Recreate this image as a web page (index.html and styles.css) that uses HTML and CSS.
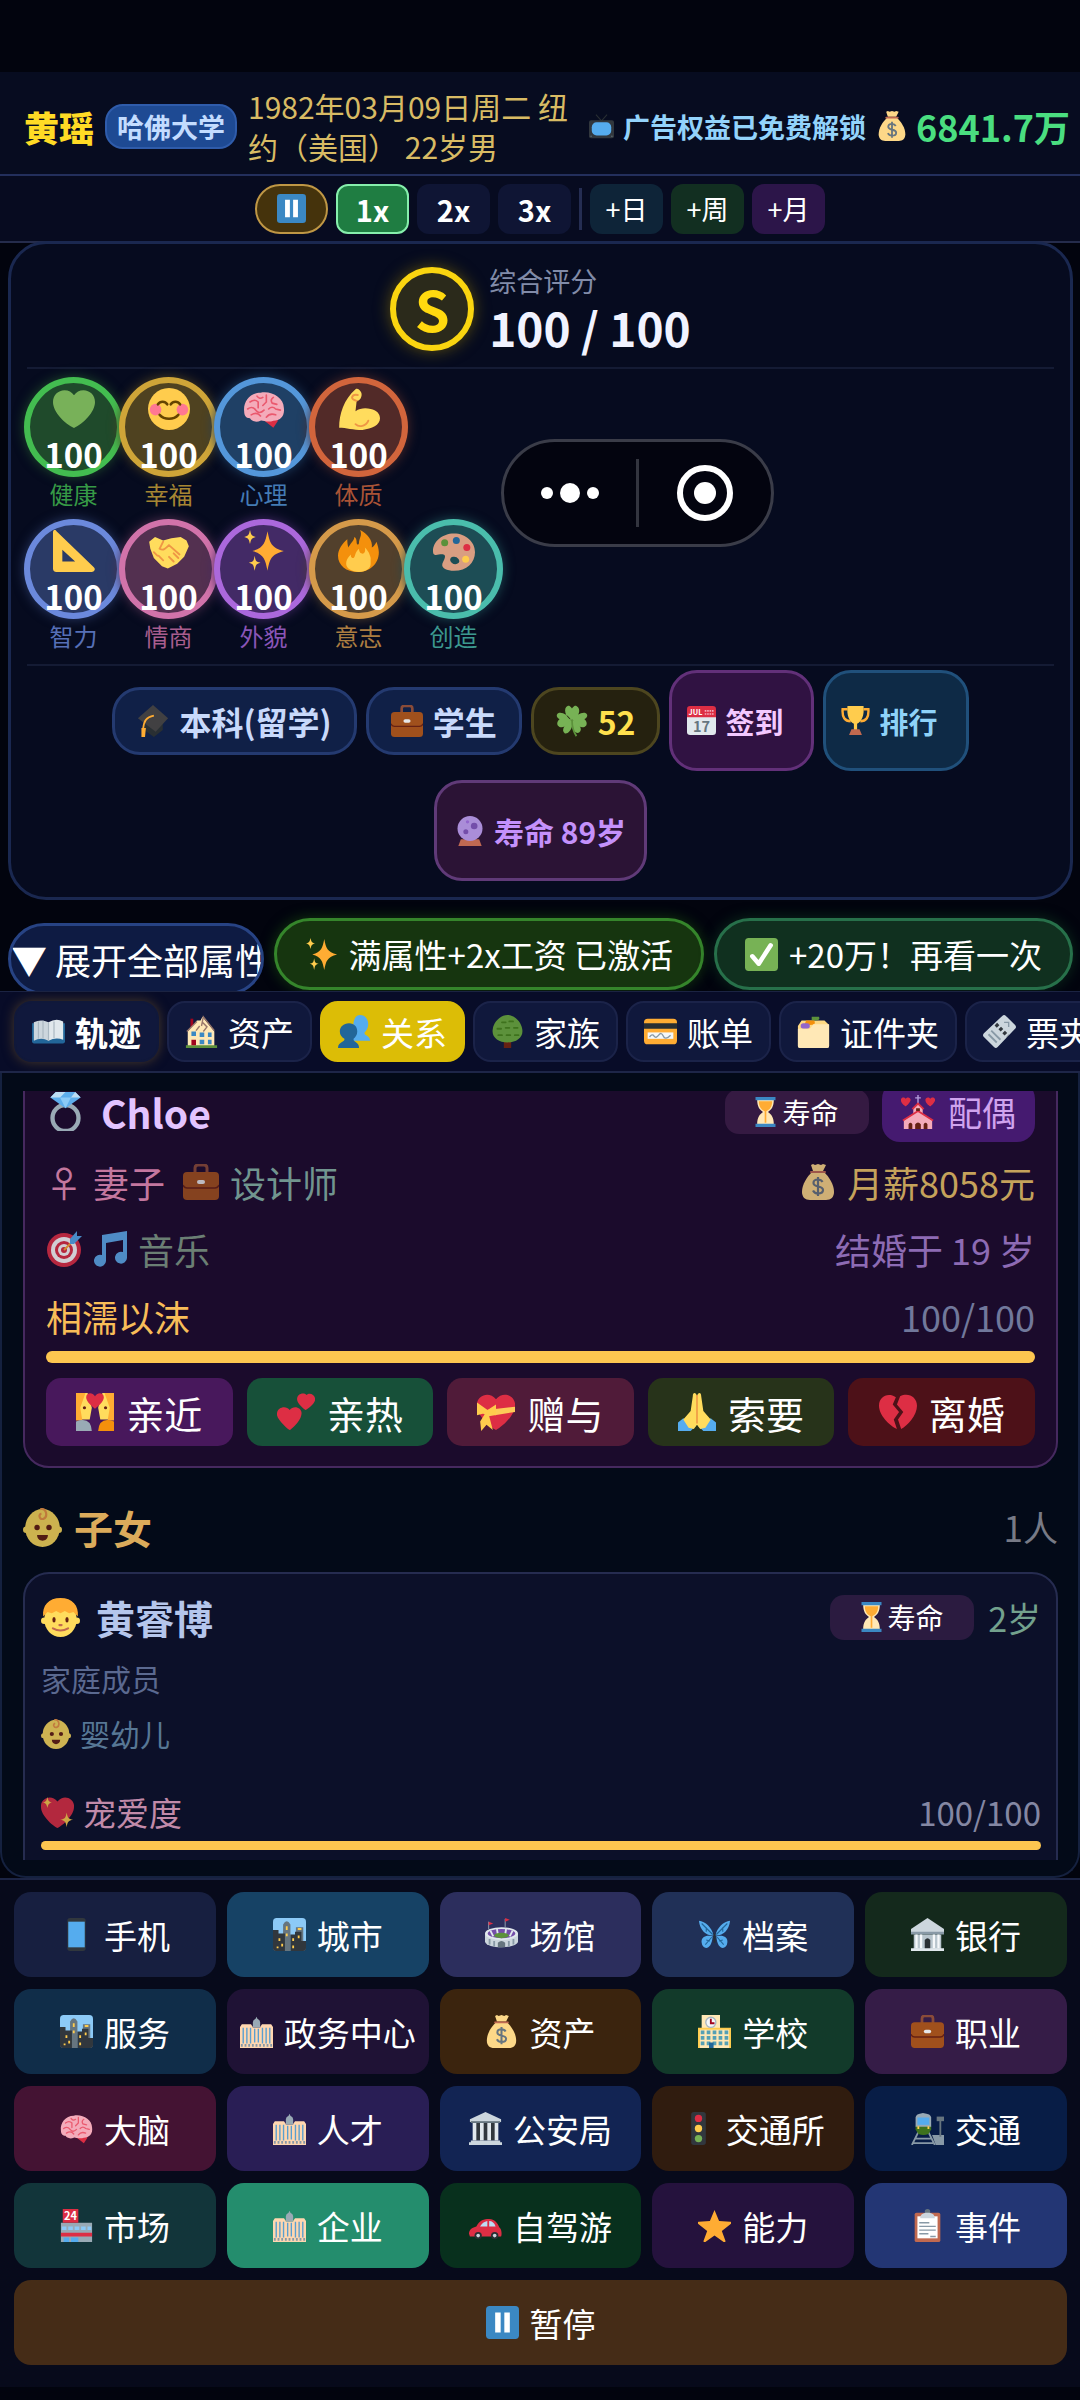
FILE: index.html
```html
<!DOCTYPE html>
<html lang="zh-CN">
<head>
<meta charset="utf-8">
<meta name="viewport" content="width=device-width, initial-scale=1">
<title>黄瑶 · 关系</title>
<link rel="stylesheet" href="styles.css">
</head>
<body>
<svg class="sprite" aria-hidden="true">
  <symbol id="pause" viewBox="0 0 36 36"><rect width="36" height="36" rx="4" fill="#3b88c3"/><path fill="#fff" d="M10 7h6v22h-6zM20 7h6v22h-6z"/></symbol>
  <symbol id="tv" viewBox="0 0 36 36"><path d="M10 1l8 9 8-9" fill="none" stroke="#292f33" stroke-width="1.500"/><rect y="9" width="36" height="26" rx="3" fill="#31373d"/><rect x="4" y="12" width="28" height="19" rx="7" fill="#55acee"/><circle cx="3" cy="32" r="1" fill="#66757f"/><circle cx="33" cy="32" r="1" fill="#66757f"/></symbol>
  <symbol id="money" viewBox="0 0 36 36"><path fill="#fdd888" d="M12 8C7 13 2 20 2 28c0 5 3 8 8 8h16c5 0 8-3 8-8 0-8-5-15-10-20z"/><path fill="#fdd888" d="M11 1l2-1 2 1 3-1 3 1 2-1 3 1-3 6H13z"/><path d="M11 8h14" stroke="#bf6952" stroke-width="2" stroke-linecap="round"/><path d="M22.500 18c-1-2-3-2.500-4.500-2.500-3 0-4.500 1.500-4.500 3.500 0 5 9.500 2 9.500 7 0 2.500-2 3.500-5 3.500-2 0-4-1-5-3M18 13v19" fill="none" stroke="#67757f" stroke-width="2.200"/></symbol>
  <symbol id="heart" viewBox="0 0 36 36"><path fill="#78b159" d="M36 11.900c0-5.500-4.400-9.900-9.900-9.900-3.400 0-6.300 1.700-8.100 4.200C16.200 3.700 13.300 2 9.900 2 4.400 2 0 6.400 0 11.900c0 8.600 9.900 18.500 18 22.300 8.100-3.800 18-13.700 18-22.300z"/></symbol>
  <symbol id="blush" viewBox="0 0 36 36"><circle cx="18" cy="18" r="18" fill="#ffcc4d"/><circle cx="6.500" cy="18.500" r="5" fill="#ff7892"/><circle cx="29.500" cy="18.500" r="5" fill="#ff7892"/><path d="M8.500 14c2-3 6-3 8 0M19.500 14c2-3 6-3 8 0M10 23c4 4.500 12 4.500 16 0" fill="none" stroke="#664500" stroke-width="2.200" stroke-linecap="round"/></symbol>
  <symbol id="brain" viewBox="0 0 36 36"><path fill="#dd2e44" d="M17 27l9 7 4-6-3-3z"/><path fill="#f4abba" d="M1 20C0 12 6 4 15 4c9-2 20 4 20 13 1 7-3 11-9 11-5 2-10-1-11 0-4 2-8 0-9-2-4 0-5-3-5-6z"/><path d="M6 12q4-3 7 0v5M12 7q2 3 5 1M20 6v6l-3 3M26 8q-3 2-1 5l4 1M4 18q4-3 7 1t7 0M22 18q3-3 6 0l4 1M7 23q5-3 8 1M20 25q3-4 8-2" fill="none" stroke="#ea596e" stroke-width="1.400" stroke-linecap="round"/></symbol>
  <symbol id="muscle" viewBox="0 0 36 36"><path fill="#ffdc5d" d="M15 1c2-1 4 1 5 3 1 3-1 7-4 7l-1 9c4-3 9-3 13-2 5 1 8 4 8 8 0 6-7 9-15 10-8 0-14-2-20-2 0-12 4-24 14-33z"/><path d="M15 31c3 3 9 2 11-3M16 11q-4-1-4-3 1-3 5-2" fill="none" stroke="#ef9645" stroke-width="1.600" stroke-linecap="round"/></symbol>
  <symbol id="ruler" viewBox="0 0 36 36"><path fill="#ffcc4d" fill-rule="evenodd" d="M0 2C0 0 2-1 3 1l32 31c2 2 0 4-2 4H3c-2 0-3-1-3-3zM8 17v10h11z"/></symbol>
  <symbol id="hands" viewBox="0 0 36 36"><path fill="#ffdc5d" d="M1 10l5-4 7 3 7-2 8-1 5 3 2 5-4 9-6 6-8 4-5-2-7-7-3-8z"/><path d="M13 10l-3 6c3 2 5 0 8-3l9 8M18 23l4 4M22 20l4 4M9 22l4 4M5 19l3 3" fill="none" stroke="#ef9645" stroke-width="1.600" stroke-linecap="round"/></symbol>
  <symbol id="sparkles" viewBox="0 0 36 36"><path fill="#ffac33" d="M21 1c2 10 3 14 14 17-11 3-12 7-14 17-2-10-3-14-13-17 10-3 11-7 13-17z"/><path fill="#ffcc4d" d="M6 0c1 4 1 5 5 6-4 1-4 2-5 6-1-4-1-5-5-6 4-1 4-2 5-6zM10 22c1 5 1 5 5 6-4 1-4 2-5 7-1-5-1-6-5-7 4-1 4-1 5-6z"/></symbol>
  <symbol id="fire" viewBox="0 0 36 36"><path fill="#f4900c" d="M35 19c0-3-1-6-2-9-1 2-2 4-4 5C30 9 25 3 19 0c2 5-1 7-1 11 0 2-2 2-2 0 0-1 0-4-2-5 0 3-4 6-5 9-1-2-1-5-1-7C4 11 0 17 0 22c0 8 7 14 17 14s18-7 18-17z"/><path fill="#ffcc4d" d="M28 24c-1-4-2-6-5-9 1 4-1 6-3 5-2-1-2-4-2-4-4 3-3 8-5 8s-2-2-2-3c-3 3-4 5-4 8 0 4 5 7 11 7s10-3 10-7z"/></symbol>
  <symbol id="palette" viewBox="0 0 36 36"><path fill="#d99e82" fill-rule="evenodd" d="M18 3C8 3 0 10 0 18c0 6 5 2 9 3 3 1 0 5-1 8-1 4 4 6 10 6 11 0 18-7 18-16S28 3 18 3zm-1 20a4 3 20 1 1-1 5 4 3 20 0 1 1-5z"/><circle cx="10" cy="11" r="3" fill="#5c913b"/><circle cx="20" cy="9" r="3" fill="#226699"/><circle cx="29" cy="15" r="3" fill="#dd2e44"/><circle cx="28" cy="25" r="3" fill="#ffcc4d"/></symbol>
  <symbol id="cap" viewBox="0 0 36 36"><path fill="#292f33" d="M8 17l10 6 11-5v10l-10 8-11-8z"/><path fill="#414042" d="M18 0L35 15 21 30 1 15z"/><path d="M19 12C10 14 8 18 7 26" fill="none" stroke="#ffac33" stroke-width="2"/><path fill="#ffac33" d="M5 26h5l-1 10H5z"/></symbol>
  <symbol id="case" viewBox="0 0 36 36"><path d="M12 9V4q0-3 3-3h6q3 0 3 3v5" fill="none" stroke="#8a4b38" stroke-width="3"/><rect y="8" width="36" height="28" rx="4" fill="#a0501c"/><path d="M0 21q1 3 4 3h28q3 0 4-3" fill="none" stroke="#662113" stroke-width="1.500"/><rect x="14" y="16" width="8" height="4" rx="2" fill="#e6e7e8"/></symbol>
  <symbol id="clover" viewBox="0 0 36 36"><path fill="#77b255" d="M18 17C10 14 8 3 13 1c3-1 5 3 5 3s2-4 5-3c6 3 3 13-5 16zM17 17C13 10 3 6 1 11c-1 3 3 5 3 5s-4 3-2 7c4 5 13 0 15-6zM19 17c4-7 14-11 16-6 1 3-3 5-3 5s4 3 2 7c-4 5-13 0-15-6z"/><path fill="#77b255" d="M18 17c-8 3-13 12-8 15 3 1 7-3 8-8 1 5 5 9 8 7 5-3 0-11-8-14z"/><path d="M18 17q0 11 5 18" fill="none" stroke="#5c913b" stroke-width="2"/></symbol>
  <symbol id="calendar" viewBox="0 0 36 36"><rect y="5" width="36" height="31" rx="4" fill="#e1e8ed"/><path fill="#dd2e44" d="M0 14V4q0-4 4-4h28q4 0 4 4v10z"/><text x="2" y="11" font-size="9" font-weight="700" fill="#fff">JUL</text><path d="M22 6h12M22 10h12" stroke="#f4abba" stroke-width="2" stroke-dasharray="2 1"/><text x="18" y="32" font-size="18" text-anchor="middle" fill="#66757f">17</text></symbol>
  <symbol id="trophy" viewBox="0 0 36 36"><path d="M8 4H2q-1 15 10 15M28 4h6q1 15-10 15" fill="none" stroke="#ffac33" stroke-width="3"/><path fill="#ffcc4d" d="M8 0h20c1 12-2 19-8 22v8h-4v-8C10 19 7 12 8 0z"/><path fill="#c1694f" d="M13 29h10l3 7H10z"/></symbol>
  <symbol id="crystal" viewBox="0 0 36 36"><path fill="#bf6952" d="M7 28h22l3 8H4z"/><circle cx="18" cy="15" r="15" fill="#aa8dd8"/><circle cx="23" cy="12" r="4" fill="#744eaa"/><circle cx="13" cy="19" r="3" fill="#744eaa"/><circle cx="15" cy="7" r="2" fill="#9266cc"/></symbol>
  <symbol id="check" viewBox="0 0 36 36"><rect width="36" height="36" rx="4" fill="#77b255"/><path d="M8 20l7 8L28 8" fill="none" stroke="#fff" stroke-width="5" stroke-linecap="round" stroke-linejoin="round"/></symbol>
  <symbol id="book" viewBox="0 0 36 36"><path fill="#226699" d="M0 9h36v20q0 2-2 2H2q-2 0-2-2z"/><path fill="#ccd6dd" d="M2 8q8-4 16 0v20q-8-4-16 0z"/><path fill="#e1e8ed" d="M18 8q8-5 16-1v20q-8-3-16 1z"/><path d="M18 8v20M12 6v20M7 7v19M24 7v18" stroke="#aab8c2" stroke-width="1.300"/></symbol>
  <symbol id="house" viewBox="0 0 36 36"><path fill="#a0041e" d="M6 4h3v9H6z"/><path fill="#ffe8b6" d="M3 18L13 6h4l2-4 13 16v16H3z"/><path d="M2 18L13 7M18 12l2-10 12 15M16 12l-4 5M19 8l5 5-4 5" fill="none" stroke="#99776b" stroke-width="1.500"/><path fill="#5c913b" d="M1 33h34v3H1z"/><path fill="#3b88c3" d="M7 18h5v5H7zM16 19h5v5h-5zM25 19h4v5h-4zM16 27h5v5h-5zM25 27h4v5h-4z"/><path fill="#a0041e" d="M7 27h5v6H7z"/></symbol>
  <symbol id="people" viewBox="0 0 36 36"><path fill="#55acee" d="M24 0c6 0 9 5 9 10 0 4-2 7-4 9-1 4 6 3 6 9H15l2-20c1-5 3-8 7-8z"/><path fill="#226699" d="M12 9c6 0 9 4 9 9 0 4-2 6-4 8-1 4 6 3 6 10H0c0-7 8-6 7-10-3-2-5-4-5-8 0-5 4-9 10-9z"/></symbol>
  <symbol id="tree" viewBox="0 0 36 36"><path fill="#662113" d="M14 25h8v11h-8z"/><path fill="#5c913b" d="M18 0c8 0 15 8 16 15 2 9-6 15-16 15S0 24 2 15C3 8 10 0 18 0z"/><path d="M12 8h4M20 7h4M7 15h4M16 14h4M25 14h4M8 22h4M17 22h4M26 22h4" stroke="#3e721d" stroke-width="2" stroke-linecap="round"/></symbol>
  <symbol id="card" viewBox="0 0 36 36"><rect y="4" width="36" height="28" rx="4" fill="#ffac33"/><path fill="#292f33" d="M0 9h36v6H0z"/><path fill="#f4f7f9" d="M4 19h28v7H4z"/><path d="M6 24q3-4 5-1t5-1 5 1 8-1" fill="none" stroke="#8899a6" stroke-width="1.500"/></symbol>
  <symbol id="folder" viewBox="0 0 36 36"><path fill="#ffd983" d="M1 12l4-6h25l5 5v23H1z"/><path fill="#5c913b" d="M16 2h8q2 4-4 4h-4z"/><path fill="#f4900c" d="M10 6h9q2 5-5 5h-6z"/><rect x="4" y="9" width="10" height="6" rx="3" fill="#9266cc"/><path fill="#ffe8b6" d="M1 15h13l4-5h17v24q0 2-2 2H3q-2 0-2-2z"/></symbol>
  <symbol id="ticket" viewBox="0 0 36 36"><path fill="#ccd6dd" d="M21 1q2-2 4 0l10 10q2 2 0 4L16 35q-2 2-4 0L1 24q-2-2 0-4z"/><path d="M14 10l13 13" stroke="#31373d" stroke-width="4" stroke-dasharray="3.500 2.500"/><path d="M9 17l10 10M6 21l9 9" stroke="#8899a6" stroke-width="2"/><path d="M23 8h5v5" fill="none" stroke="#8899a6" stroke-width="1.500"/></symbol>
  <symbol id="ring" viewBox="0 0 36 36"><circle cx="18" cy="24" r="12" fill="none" stroke="#99aab5" stroke-width="4"/><path fill="#5dadec" d="M9 0h18l5 5-14 10L4 5z"/><path fill="#bdddf4" d="M9 0h9l-5 5H4zM27 0l5 5h-9z"/><path fill="#8ccaf7" d="M13 5h10l-5 10z"/></symbol>
  <symbol id="glass" viewBox="0 0 24 36"><path fill="#ffe8b6" d="M2 3h20c0 9-3 12-7 15 4 3 7 6 7 15H2c0-9 3-12 7-15-4-3-7-6-7-15z"/><path fill="#ffac33" d="M4 5h16c0 7-3 10-7 12v14h-2V17C7 15 4 12 4 5z"/><path fill="#3b88c3" d="M0 0h24v4H0zM0 32h24v4H0z"/></symbol>
  <symbol id="wedding" viewBox="0 0 36 36"><path fill="#dd2e44" d="M5 4c2-3 6-1 5 2-1 3-5 6-5 6S0 9 0 6c-1-3 3-5 5-2zM31 4c2-3 6-1 5 2-1 3-5 6-5 6s-5-3-5-6c-1-3 3-5 5-2z"/><path d="M18 0v9M15 3h6" stroke="#b39ddb" stroke-width="1.500"/><path fill="#f4abba" d="M13 14l5-5 5 5v6l10 7v9H3v-9l10-7z"/><path d="M12 15l6-6 6 6M2 27l16-10 16 10" fill="none" stroke="#dd2e44" stroke-width="2"/><path fill="#662113" d="M15 36v-5q3-4 6 0v5zM8 36v-5q2-3 4 0v5zM24 36v-5q2-3 4 0v5zM16 17v-3h4v3z"/></symbol>
  <symbol id="target" viewBox="0 0 36 36"><circle cx="18" cy="19" r="17" fill="#dd2e44"/><circle cx="18" cy="19" r="13" fill="#fff"/><circle cx="18" cy="19" r="9" fill="#dd2e44"/><circle cx="18" cy="19" r="6" fill="#fff"/><circle cx="18" cy="19" r="3" fill="#dd2e44"/><path d="M18 19L29 8" stroke="#ffac33" stroke-width="2"/><path fill="#55acee" d="M24 8l7-8v5h5l-8 8h-4z"/></symbol>
  <symbol id="music" viewBox="0 0 36 36"><path fill="#5dadec" d="M10 4l25-4v27a6 6 0 1 1-4-6V9l-17 3v18a6 6 0 1 1-4-6z"/></symbol>
  <symbol id="kiss" viewBox="0 0 36 36"><path fill="#ffdc5d" d="M0 0h11l4 14-2 11H0zM36 0H25l-4 14 2 11h13z"/><path fill="#ffac33" d="M0 0h9L4 14l2 12H0zM36 0h-9l5 14-2 12h6z"/><path fill="#99aab5" d="M0 27q14-5 15 9H0z"/><path fill="#f4900c" d="M36 27q-14-5-15 9h15z"/><path fill="#dd2e44" d="M18 3c3-5 10-3 8 3-1 4-8 9-8 9s-7-5-8-9c-2-6 5-8 8-3z"/><circle cx="8" cy="14" r="1.500" fill="#662113"/><circle cx="28" cy="14" r="1.500" fill="#662113"/></symbol>
  <symbol id="two-hearts" viewBox="0 0 36 36"><path fill="#dd2e44" d="M12 16c4-5 13-2 11 5-1 6-10 14-11 14S1 26 0 21c-1-7 8-10 12-5z"/><path fill="#dd2e44" d="M28 2c3-3 9 0 8 5-1 4-8 9-9 9s-8-6-8-10c0-5 6-7 9-4z"/></symbol>
  <symbol id="gift-heart" viewBox="0 0 36 36"><path fill="#dd2e44" d="M18 6C25-3 37 3 36 12c0 9-12 20-18 23C12 32 0 21 0 12-1 3 11-3 18 6z"/><path fill="#fdcb58" d="M1 17L36 13v5L11 22z"/><path fill="#ffcc4d" d="M0 9l10 7 8-5v10l-7-1 4 15-6-5-5 6-1-9 5-8-8 2z"/></symbol>
  <symbol id="pray" viewBox="0 0 36 36"><path fill="#55acee" d="M5 24l-5 4v8h12l5-5zM31 24l5 4v8H24l-5-5z"/><path fill="#ffdc5d" d="M18 3c-1-4-4-4-4 0l-2 14-7 8 5 8 5 1 3-4 3 4 5-1 5-8-7-8-2-14c0-4-3-4-4 0z"/><path d="M18 2v27" stroke="#ef9645" stroke-width="1.500"/></symbol>
  <symbol id="broken" viewBox="0 0 36 36"><path fill="#dd2e44" d="M16 4C8-1 0 4 0 12c0 9 10 19 17 22l-3-9 5-7-6-7zM20 3c8-4 16 1 16 9 0 9-9 19-15 22l-3-9 5-7-6-7z"/></symbol>
  <symbol id="baby" viewBox="0 0 36 36"><circle cx="3" cy="20" r="3" fill="#ffdc5d"/><circle cx="33" cy="20" r="3" fill="#ffdc5d"/><ellipse cx="18" cy="18.500" rx="16" ry="17.500" fill="#ffdc5d"/><path d="M16 1c6-1 7 7 3 9-4 1-5-4-2-5" fill="none" stroke="#ef9645" stroke-width="2"/><circle cx="13" cy="18" r="2.500" fill="#662113"/><circle cx="24" cy="18" r="2.500" fill="#662113"/><path fill="#662113" d="M13 25h10c0 7-10 7-10 0z"/></symbol>
  <symbol id="boy" viewBox="0 0 36 36"><circle cx="3" cy="21" r="3" fill="#ffdc5d"/><circle cx="33" cy="21" r="3" fill="#ffdc5d"/><ellipse cx="18" cy="20" rx="15" ry="16" fill="#ffdc5d"/><path fill="#ffac33" d="M2 17C1 7 7 0 18 0s17 7 16 17l-4-4-4 1-4-2-4 2-4-2-4 2-4-1z"/><ellipse cx="12" cy="20" rx="1.500" ry="2.500" fill="#662113"/><ellipse cx="24" cy="20" rx="1.500" ry="2.500" fill="#662113"/><path d="M11 28q7 4 14 0M17 25h2" fill="none" stroke="#c1694f" stroke-width="2" stroke-linecap="round"/></symbol>
  <symbol id="spark-heart" viewBox="0 0 36 36"><path fill="#dd2e44" d="M18 6C25-3 37 3 36 12c0 9-12 20-18 23C12 32 0 21 0 12-1 3 11-3 18 6z"/><path fill="#ffcc4d" d="M7 1c1 4 1 5 5 6-4 1-4 2-5 6-1-4-1-5-5-6 4-1 4-2 5-6zM28 18c1 6 2 7 7 8-5 1-6 2-7 8-1-6-2-7-7-8 5-1 6-2 7-8z"/></symbol>
  <symbol id="phone" viewBox="0 0 36 36"><rect x="8" width="20" height="36" rx="3" fill="#31373d"/><path fill="#55acee" d="M9 4h18v28H9z"/></symbol>
  <symbol id="city" viewBox="0 0 36 36"><rect width="36" height="36" rx="4" fill="#8ccaf7"/><path fill="#66757f" d="M11 7q4-7 8 0v29h-8zM25 10h8v16h-8z"/><path fill="#31373d" d="M0 13h6v4h7v19H3q-3 0-3-3zM19 18h5v-3h7v10h5v8q0 3-3 3H19z"/><path d="M15 9v4M15 17v3M27 12h4M7 22v3M10 28v3M22 22v3M22 30v3M28 19v3M5 31v2" stroke="#ffcc4d" stroke-width="2"/></symbol>
  <symbol id="stadium" viewBox="0 0 36 36"><path d="M4 12V4M22 10V1" stroke="#99aab5"/><path fill="#dd2e44" d="M4 4l5 2-5 2zM22 0l5 2-5 2z"/><path fill="#ccd6dd" d="M0 17h36v9c-2 8-34 8-36 0z"/><ellipse cx="18" cy="17" rx="18" ry="7" fill="#e1e8ed"/><ellipse cx="18" cy="17" rx="15" ry="5" fill="#744eaa"/><path d="M6 14l3 6M13 12l1 6M23 12l-1 6M30 14l-3 6" stroke="#e1e8ed" stroke-width="2"/><ellipse cx="18" cy="19" rx="8" ry="3" fill="#5c913b"/><path d="M5 23v6M10 25v6M26 25v6M31 23v6" stroke="#8899a6" stroke-width="2"/><path fill="#66757f" d="M14 32v-5q4-4 8 0v5z"/></symbol>
  <symbol id="butterfly" viewBox="0 0 36 36"><path fill="#55acee" d="M1 3c7 1 14 7 16 16-7 1-15-5-16-16zM35 3c-7 1-14 7-16 16 7 1 15-5 16-16zM16 20c-7-2-13 1-12 7 1 8 11 9 12-7zM20 20c7-2 13 1 12 7-1 8-11 9-12-7z"/><path d="M4 6l12 12M32 6L20 18M9 10v5M27 10v5M15 21l-7 8M21 21l7 8M9 24l4 1M27 24l-4 1" stroke="#226699" stroke-width="1.200"/><path d="M18 17v10" stroke="#292f33" stroke-width="2"/></symbol>
  <symbol id="bank" viewBox="0 0 36 36"><path fill="#b8c5cd" d="M3 18h30v16H3z"/><path fill="#ccd6dd" d="M18 0L36 12v4H0v-4z"/><path fill="#8899a6" d="M0 15h36v3H0z"/><path d="M6 18v15M11 18v15M25 18v15M30 18v15" stroke="#f5f8fa" stroke-width="2.500"/><path fill="#292f33" d="M15 34V24q3-4 6 0v10z"/><path fill="#e1e8ed" d="M0 33h36v3H0z"/></symbol>
  <symbol id="museum" viewBox="0 0 36 36"><path fill="#31373d" d="M5 11h26v20H5z"/><path fill="#ccd6dd" d="M18 0l17 8v3H1V8z"/><path fill="#66757f" d="M2 10h32v2H2z"/><path d="M6 12v19M14 12v19M22 12v19M30 12v19" stroke="#e1e8ed" stroke-width="4"/><path fill="#ccd6dd" d="M2 31h32v2H2zM0 33h36v3H0z"/></symbol>
  <symbol id="office" viewBox="0 0 36 36"><path fill="#99aab5" d="M14 14V8q0-3 3-4l1-2 1 2q3 1 3 4v6z"/><path fill="#ffd7b0" d="M0 13l2-3h10l2 3v23H0zM22 13l2-3h10l2 3v23H22zM13 14h10v22H13z"/><path d="M3.500 14v17M7.500 14v17M11.500 14v17M24.500 14v17M28.500 14v17M32.500 14v17M16 15v15M20 15v15" stroke="#5a9fd0" stroke-width="1.500"/><path d="M1 33h34" stroke="#8899a6" stroke-width="3" stroke-dasharray="2 2"/></symbol>
  <symbol id="school" viewBox="0 0 36 36"><path fill="#ffe8b6" d="M4 0h20v15H4z"/><path fill="#ffcc4d" d="M0 14h36v22H0z"/><path fill="#ffe8b6" d="M2 16h32v20H2z"/><circle cx="14" cy="8" r="5.500" fill="#f5f8fa" stroke="#aab8c2" stroke-width="1.500"/><path d="M14 4v5h4" fill="none" stroke="#a0041e" stroke-width="2"/><path d="M3 19h30M3 25h30M3 31h30" stroke="#55a0b5" stroke-width="4" stroke-dasharray="4 2.500"/><path fill="#226699" d="M12 30h5v6h-5z"/></symbol>
  <symbol id="light" viewBox="0 0 36 36"><rect x="10" width="16" height="36" rx="3" fill="#31373d"/><circle cx="18" cy="7" r="4" fill="#dd2e44"/><circle cx="18" cy="18" r="4" fill="#ffcc4d"/><circle cx="18" cy="29" r="4" fill="#77b255"/></symbol>
  <symbol id="station" viewBox="0 0 36 36"><path fill="#8899a6" d="M23 25h13v11H27z"/><path d="M32 7v20" stroke="#66757f" stroke-width="2"/><path fill="#66757f" d="M28 5h8v5h-8z"/><path d="M8 22L1 36M19 22l7 14M4 29h18M2 34h22" stroke="#8899a6" stroke-width="2"/><path fill="#3e721d" d="M5 15h17v4l-3 5q-5 2-11 0l-3-5z"/><path fill="#99aab5" d="M5 16V6q0-4 8-5 9 1 9 5v10z"/><path fill="#55acee" d="M7 6h13v8H7z"/><path d="M7 17h2M18 17h2" stroke="#ffcc4d" stroke-width="3"/></symbol>
  <symbol id="store" viewBox="0 0 36 36"><path fill="#99aab5" d="M1 15h34v21H1z"/><path fill="#dd2e44" d="M3 0h17v15H3zM1 26h34v4H1z"/><text x="11.500" y="12" text-anchor="middle" font-size="12" font-weight="700" fill="#fff">24</text><path d="M2 21h32" stroke="#8ccaf7" stroke-width="4" stroke-dasharray="5 2"/><path fill="#55acee" d="M4 31h6v5H4zM12 31h8v5h-8z"/></symbol>
  <symbol id="car" viewBox="0 0 36 36"><path fill="#dd2e44" d="M0 27c0-5 4-7 8-8 4-7 8-8 14-8 6 0 9 4 11 9 3 2 3 9 2 10H1z"/><path fill="#bdddf4" d="M12 19q3-5 8-6v6zM22 13q5 0 7 6h-7z"/><circle cx="10" cy="29" r="4" fill="#292f33"/><circle cx="28" cy="29" r="4" fill="#292f33"/><circle cx="10" cy="29" r="2" fill="#ccd6dd"/><circle cx="28" cy="29" r="2" fill="#ccd6dd"/></symbol>
  <symbol id="star" viewBox="0 0 36 36"><path fill="#ffac33" d="M18 1l5 12 12 1c2 0 2 1 1 2l-10 8 4 11c0 1-1 2-2 1l-10-7-10 7c-1 1-2 0-2-1l4-11L0 16c-1-1-1-2 1-2l12-1z"/></symbol>
  <symbol id="clipboard" viewBox="0 0 36 36"><rect x="4" y="4" width="28" height="32" rx="2" fill="#c1694f"/><path fill="#fff" d="M7 8h22v24H7z"/><circle cx="18" cy="3" r="3" fill="#66757f"/><path fill="#ccd6dd" d="M10 10q0-5 6-6h4q6 1 6 6z"/><path d="M9 15h11M9 19h18M9 23h18M9 27h10M21 30h6" stroke="#8899a6" stroke-width="1.500"/></symbol>
</svg>

<header class="topbar">
  <strong class="player">黄瑶</strong>
  <span class="school">哈佛大学</span>
  <p class="date">1982年03月09日周二 纽约（美国） 22岁男</p>
  <span class="ad"><svg class="ico"><use href="#tv"/></svg>广告权益已免费解锁</span>
  <span class="cash"><svg class="ico"><use href="#money"/></svg>6841.7万</span>
</header>

<div class="speed">
  <button class="pause" aria-label="暂停"><svg class="ico"><use href="#pause"/></svg></button>
  <button class="on">1x</button>
  <button>2x</button>
  <button>3x</button>
  <i class="sep"></i>
  <button class="skip day">+日</button>
  <button class="skip week">+周</button>
  <button class="skip month">+月</button>
</div>

<section class="stats">
  <div class="score">
    <span class="grade">S</span>
    <div>
      <p class="score-label">综合评分</p>
      <p class="score-value">100 / 100</p>
    </div>
  </div>
  <div class="rings">
    <div class="ring-row">
      <div class="ring green"><div class="dial"><svg class="ico"><use href="#heart"/></svg><b>100</b></div><span>健康</span></div>
      <div class="ring gold"><div class="dial"><svg class="ico"><use href="#blush"/></svg><b>100</b></div><span>幸福</span></div>
      <div class="ring blue"><div class="dial"><svg class="ico"><use href="#brain"/></svg><b>100</b></div><span>心理</span></div>
      <div class="ring red"><div class="dial"><svg class="ico"><use href="#muscle"/></svg><b>100</b></div><span>体质</span></div>
    </div>
    <div class="ring-row">
      <div class="ring indigo"><div class="dial"><svg class="ico"><use href="#ruler"/></svg><b>100</b></div><span>智力</span></div>
      <div class="ring pink"><div class="dial"><svg class="ico"><use href="#hands"/></svg><b>100</b></div><span>情商</span></div>
      <div class="ring purple"><div class="dial"><svg class="ico"><use href="#sparkles"/></svg><b>100</b></div><span>外貌</span></div>
      <div class="ring amber"><div class="dial"><svg class="ico"><use href="#fire"/></svg><b>100</b></div><span>意志</span></div>
      <div class="ring teal"><div class="dial"><svg class="ico"><use href="#palette"/></svg><b>100</b></div><span>创造</span></div>
    </div>
    <div class="capsule">
      <button aria-label="更多"><svg viewBox="0 0 60 60"><circle cx="7" cy="30" r="6"/><circle cx="30" cy="30" r="10"/><circle cx="53" cy="30" r="6"/></svg></button>
      <i></i>
      <button aria-label="关闭"><svg viewBox="0 0 60 60"><circle cx="30" cy="30" r="25" class="hollow"/><circle cx="30" cy="30" r="11"/></svg></button>
    </div>
  </div>
  <div class="chips">
    <span class="chip"><svg class="ico"><use href="#cap"/></svg>本科(留学)</span>
    <span class="chip"><svg class="ico"><use href="#case"/></svg>学生</span>
    <span class="chip luck"><svg class="ico"><use href="#clover"/></svg>52</span>
    <button class="chip tall sign"><svg class="ico"><use href="#calendar"/></svg>签到</button>
    <button class="chip tall rank"><svg class="ico"><use href="#trophy"/></svg>排行</button>
    <button class="chip tall life"><svg class="ico"><use href="#crystal"/></svg>寿命 89岁</button>
  </div>
</section>

<div class="actions">
  <button class="expand">▼ 展开全部属性</button>
  <button class="pill boost"><svg class="ico"><use href="#sparkles"/></svg>满属性+2x工资 已激活</button>
  <button class="pill bonus"><svg class="ico"><use href="#check"/></svg>+20万！再看一次</button>
</div>

<nav class="tabs">
  <button class="glow"><svg class="ico"><use href="#book"/></svg>轨迹</button>
  <button><svg class="ico"><use href="#house"/></svg>资产</button>
  <button class="active"><svg class="ico"><use href="#people"/></svg>关系</button>
  <button><svg class="ico"><use href="#tree"/></svg>家族</button>
  <button><svg class="ico"><use href="#card"/></svg>账单</button>
  <button><svg class="ico"><use href="#folder"/></svg>证件夹</button>
  <button><svg class="ico"><use href="#ticket"/></svg>票夹</button>
</nav>

<main class="feed">
  <div class="scroll">
    <div class="scrolled">
      <article class="card spouse">
        <div class="row head">
          <h2><svg class="ico"><use href="#ring"/></svg>Chloe</h2>
          <button class="span-btn"><svg class="ico"><use href="#glass"/></svg>寿命</button>
          <span class="mate"><svg class="ico"><use href="#wedding"/></svg>配偶</span>
        </div>
        <div class="row">
          <span class="line"><span class="line rose"><span>♀</span>妻子</span><span class="line sage"><svg class="ico dim"><use href="#case"/></svg>设计师</span></span>
          <span class="line sand"><svg class="ico dim"><use href="#money"/></svg>月薪8058元</span>
        </div>
        <div class="row">
          <span class="line moss"><svg class="ico dim"><use href="#target"/></svg><svg class="ico dim"><use href="#music"/></svg>音乐</span>
          <span class="violet">结婚于 19 岁</span>
        </div>
        <div class="row">
          <label class="bond" for="bond">相濡以沫</label>
          <span class="slate">100/100</span>
        </div>
        <progress id="bond" value="100" max="100"></progress>
        <div class="deeds">
          <button class="d-purple"><svg class="ico"><use href="#kiss"/></svg>亲近</button>
          <button class="d-green"><svg class="ico"><use href="#two-hearts"/></svg>亲热</button>
          <button class="d-wine"><svg class="ico"><use href="#gift-heart"/></svg>赠与</button>
          <button class="d-olive"><svg class="ico"><use href="#pray"/></svg>索要</button>
          <button class="d-red"><svg class="ico"><use href="#broken"/></svg>离婚</button>
        </div>
      </article>

      <div class="group">
        <h2><svg class="ico dim"><use href="#baby"/></svg>子女</h2>
        <span>1人</span>
      </div>

      <article class="card child">
        <div class="row head">
          <h2><svg class="ico"><use href="#boy"/></svg>黄睿博</h2>
          <button class="span-btn"><svg class="ico"><use href="#glass"/></svg>寿命</button>
          <span class="age">2岁</span>
        </div>
        <p class="role">家庭成员</p>
        <p class="stage"><svg class="ico dim"><use href="#baby"/></svg>婴幼儿</p>
        <div class="row love">
          <label for="love"><svg class="ico dim"><use href="#spark-heart"/></svg>宠爱度</label>
          <span>100/100</span>
        </div>
        <progress id="love" value="100" max="100"></progress>
      </article>
    </div>
  </div>
</main>

<footer class="dock">
  <button class="k1"><svg class="ico"><use href="#phone"/></svg>手机</button>
  <button class="k2"><svg class="ico"><use href="#city"/></svg>城市</button>
  <button class="k3"><svg class="ico"><use href="#stadium"/></svg>场馆</button>
  <button class="k4"><svg class="ico"><use href="#butterfly"/></svg>档案</button>
  <button class="k5"><svg class="ico"><use href="#bank"/></svg>银行</button>
  <button class="k6"><svg class="ico"><use href="#city"/></svg>服务</button>
  <button class="k7"><svg class="ico"><use href="#office"/></svg>政务中心</button>
  <button class="k8"><svg class="ico"><use href="#money"/></svg>资产</button>
  <button class="k9"><svg class="ico"><use href="#school"/></svg>学校</button>
  <button class="k10"><svg class="ico"><use href="#case"/></svg>职业</button>
  <button class="k11"><svg class="ico"><use href="#brain"/></svg>大脑</button>
  <button class="k12"><svg class="ico"><use href="#office"/></svg>人才</button>
  <button class="k13"><svg class="ico"><use href="#museum"/></svg>公安局</button>
  <button class="k14"><svg class="ico"><use href="#light"/></svg>交通所</button>
  <button class="k15"><svg class="ico"><use href="#station"/></svg>交通</button>
  <button class="k16"><svg class="ico"><use href="#store"/></svg>市场</button>
  <button class="k17"><svg class="ico"><use href="#office"/></svg>企业</button>
  <button class="k18"><svg class="ico"><use href="#car"/></svg>自驾游</button>
  <button class="k19"><svg class="ico"><use href="#star"/></svg>能力</button>
  <button class="k20"><svg class="ico"><use href="#clipboard"/></svg>事件</button>
  <button class="wide"><svg class="ico"><use href="#pause"/></svg>暂停</button>
</footer>
</body>
</html>
```

FILE: styles.css
```css
* { box-sizing: border-box; }

body {
  margin: 0;
  height: 100vh;
  padding: 72px 0 13px;
  display: flex;
  flex-direction: column;
  overflow: hidden;
  background: #02040e;
  color: #fff;
  font-family: "Noto Sans CJK SC", "Noto Sans", sans-serif;
  font-size: 33px;
  white-space: nowrap;
}

p, h2 { margin: 0; font-size: inherit; }

button {
  margin: 0;
  padding: 0;
  border: 0;
  font: inherit;
  color: inherit;
  display: flex;
  align-items: center;
  justify-content: center;
  white-space: nowrap;
}

.sprite { position: absolute; width: 0; height: 0; }
.ico { width: 1em; height: 1em; flex: none; display: block; }
.dim { opacity: .8; }

/* Header */
.topbar {
  display: flex;
  align-items: center;
  gap: 11px;
  height: 104px;
  flex: none;
  padding: 6px 10px 0 24px;
  background: #070c20;
  border-bottom: 2px solid #232f5c;
}
.player { font-size: 35px; font-weight: 900; color: #ffdb25; }
.school {
  padding: 0 10px;
  border: 2px solid #2f5cab;
  border-radius: 18px;
  background: #1e4a93;
  font-size: 27px;
  line-height: 41px;
  font-weight: 700;
  color: #c3dcff;
}
.date {
  flex: 1;
  font-size: 30px;
  line-height: 40px;
  color: #d8bb64;
  white-space: normal;
}
.ad, .cash { display: flex; align-items: center; gap: 9px; font-weight: 700; }
.ad { font-size: 27px; color: #93d3fb; }
.cash { font-size: 36px; line-height: 40px; color: #4ade80; font-weight: 700; }
.cash .ico { width: 30px; height: 30px; }
.ad .ico { width: 25px; height: 25px; }

/* Speed bar */
.speed {
  display: flex;
  align-items: center;
  justify-content: center;
  gap: 8px;
  height: 67px;
  flex: none;
  background: #070b20;
  border-bottom: 2px solid #252c4c;
}
.speed button {
  width: 73px;
  height: 50px;
  border-radius: 12px;
  background: #0f1534;
  font-size: 29px;
  font-weight: 700;
}
.speed .pause { border: 2px solid #bf9745; border-radius: 26px; background: #45330c; }
.speed .on { border: 2px solid #86efac; background: #1f7d42; }
.speed .skip { font-size: 27px; font-weight: 400; }
.speed .day { background: #0e2438; }
.speed .week { background: #122f21; }
.speed .month { background: #2c1549; }
.sep { width: 3px; height: 42px; background: #252d52; }

/* Stats panel */
.stats {
  flex: none;
  margin: -2px 7px 0 8px;
  padding: 21px 13px 16px;
  border: 3px solid #1a2850;
  border-radius: 38px;
  background: #060b1f;
}
.score {
  display: flex;
  justify-content: center;
  align-items: center;
  gap: 15px;
  height: 104px;
  margin: 0 3px;
  padding-bottom: 14px;
  border-bottom: 2px solid #141b34;
}
.grade {
  width: 84px;
  height: 84px;
  border: 6px solid #fad510;
  border-radius: 50%;
  background: #2b2a1b;
  box-shadow: 0 0 16px #5a4d0e;
  font-size: 56px;
  line-height: 70px;
  font-weight: 700;
  text-align: center;
  color: #ffd90f;
}
.score-label { font-size: 27px; line-height: 36px; color: #818ba8; }
.score-value { font-size: 46px; line-height: 56px; font-weight: 700; color: #f1f3ff; }

.rings {
  position: relative;
  display: grid;
  gap: 8px;
  margin: 0 3px;
  padding: 8px 0 11px;
  border-bottom: 2px solid #141b34;
}
.ring-row { display: flex; margin-left: -3px; }
.ring { width: 99px; margin-right: -4px; color: var(--c); text-align: center; }
.ring > span { display: block; font-size: 24px; line-height: 34px; opacity: .8; }
.dial {
  display: flex;
  flex-direction: column;
  align-items: center;
  gap: 7px;
  height: 100px;
  padding-top: 5px;
  border: 6px solid var(--c);
  border-radius: 50%;
  background: var(--b);
  box-shadow: 0 0 12px var(--b);
}
.dial .ico { width: 42px; height: 42px; }
.dial b { font-size: 33px; line-height: 34px; color: #fff; }
.green { --c: #43bd50; --b: #1f4a2b; }
.gold { --c: #cfa538; --b: #4f4220; }
.blue { --c: #5497da; --b: #1f4065; }
.red { --c: #d2653c; --b: #522a28; }
.indigo { --c: #6b89dc; --b: #2a3a66; }
.pink { --c: #d173aa; --b: #533050; }
.purple { --c: #ab68dc; --b: #432a66; }
.amber { --c: #d59a4a; --b: #52402c; }
.teal { --c: #4abdac; --b: #1d4d55; }

/* Floating mini-program control */
.capsule {
  position: absolute;
  top: 70px;
  left: 474px;
  display: flex;
  align-items: center;
  width: 273px;
  height: 108px;
  border: 3px solid #3a3c48;
  border-radius: 54px;
  background: #03040f;
}
.capsule button { flex: 1; background: none; }
.capsule svg { width: 60px; height: 60px; fill: #fff; }
.capsule .hollow { fill: none; stroke: #fff; stroke-width: 6px; }
.capsule i { width: 3px; height: 68px; background: #33353f; }

.chips { display: flex; flex-wrap: wrap; align-items: center; justify-content: center; gap: 9px; padding-top: 4px; }
.chip {
  display: flex;
  align-items: center;
  gap: 10px;
  height: 68px;
  padding: 0 22px;
  border: 3px solid #243a70;
  border-radius: 28px;
  background: #102047;
  font-size: 32px;
  font-weight: 700;
  color: #c8d9fb;
}
.luck { border-color: #4d461f; background: #25210f; color: #ffe04d; }
.tall { height: 101px; font-size: 29px; gap: 9px; }
.sign { padding: 0 28px 0 15px; border-color: #623079; background: #301242; color: #f3c8ff; }
.rank { padding: 0 28px 0 15px; border-color: #20507b; background: #0e2a46; color: #8ed2f8; }
.life { padding: 0 18px; border-color: #603a78; background: #2b1335; font-size: 30px; color: #c491fb; }

/* Action pills */
.actions {
  display: flex;
  align-items: flex-start;
  gap: 10px;
  flex: none;
  height: 91px;
  padding: 18px 7px 0 8px;
  overflow: hidden;
}
.expand {
  flex: 1;
  min-width: 0;
  height: 72px;
  margin-top: 5px;
  justify-content: flex-start;
  overflow: hidden;
  border: 3px solid #274384;
  border-radius: 36px;
  background: #0e1b43;
  font-size: 36px;
}
.pill { height: 72px; padding: 0 28px; gap: 11px; border: 3px solid; border-radius: 36px; }
.boost { border-color: #35852b; background: #16350f; box-shadow: 0 0 14px #12380f; }
.bonus { border-color: #27704a; background: #10301f; box-shadow: 0 0 14px #0b2b1c; }

/* Tabs */
.tabs {
  display: flex;
  align-items: center;
  gap: 8px;
  flex: none;
  height: 82px;
  padding: 0 14px;
  overflow: hidden;
  border-top: 1px solid #1b2342;
  border-bottom: 2px solid #1e2648;
  background: #080c28;
}
.tabs button {
  flex: none;
  height: 61px;
  gap: 10px;
  padding: 0 16px;
  border: 2px solid #1b2349;
  border-radius: 18px;
  background: #10183c;
}
.tabs .glow { border-color: #10183a; box-shadow: 0 0 12px #4a3a2a; font-weight: 700; }
.tabs .active { border-color: #dcbd06; background: #dcbd06; }

/* Relationship feed */
.feed {
  flex: 1;
  min-height: 0;
  padding: 18px 20px 16px 21px;
  border: 2px solid #15213f;
  border-top: 0;
  border-radius: 0 0 26px 26px;
  background: #030a18;
}
.scroll { height: 100%; overflow: hidden; }
.scrolled { margin-top: -32px; }
.card { border: 2px solid; border-radius: 26px; }
.row { display: flex; align-items: center; justify-content: space-between; }
.line { display: flex; align-items: center; gap: 11px; }
.head h2 { display: flex; align-items: center; gap: 16px; margin-right: auto; font-size: 39px; line-height: 46px; }
.span-btn { width: 144px; height: 45px; gap: 6px; border-radius: 14px; background: #2b1b40; font-size: 28px; }
.span-btn .ico { width: 21px; height: 30px; }

progress { display: block; width: 100%; border: 0; border-radius: 6px; appearance: none; overflow: hidden; background: #2a2440; }
progress::-webkit-progress-bar { background: #2a2440; }
progress::-webkit-progress-value { background: #fdc650; }

.spouse { padding: 20px 21px; border-color: #46295f; background: #1b0b2c; font-size: 36px; }
.spouse .row { height: 54px; margin-top: 13px; }
.spouse .head { height: 61px; margin-top: 0; gap: 13px; }
.spouse h2 { color: #e3c4ff; }
.spouse .span-btn { background: #351a42; }
.mate {
  display: flex;
  align-items: center;
  gap: 13px;
  height: 61px;
  padding: 0 19px;
  border-radius: 18px;
  background: #451a70;
  font-size: 34px;
  color: #d0a3ee;
}
.rose { color: #c4779f; margin-right: 7px; }
.sage { color: #71958f; }
.sand { color: #c5a25b; }
.moss { gap: 10px; color: #6b7f74; }
.violet { color: #8d6bb4; }
.bond { color: #f8bd58; }
.slate { color: #71789b; }
.spouse progress { height: 12px; margin: 8px 0 15px; }
.deeds { display: grid; grid-template-columns: repeat(5, 1fr); gap: 14px; font-size: 38px; }
.deeds button { height: 68px; gap: 12px; border-radius: 15px; }
.d-purple { background: #48185c; }
.d-green { background: #175039; }
.d-wine { background: #501b39; }
.d-olive { background: #27331a; }
.d-red { background: #4d1118; }

.group { display: flex; align-items: center; justify-content: space-between; margin: 32px 0 18px; line-height: 54px; font-size: 35px; color: #777a86; }
.group h2 { display: flex; align-items: center; gap: 12px; font-size: 39px; color: #dbab5b; }

.child { padding: 20px 15px 48px 16px; border-color: #262c50; background: #0c1029; }
.child .head { height: 46px; gap: 14px; }
.child h2 { color: #b5c6ec; }
.age { font-size: 34px; color: #73a18d; }
.role, .stage { font-size: 30px; line-height: 45px; color: #5b6990; }
.role { margin: 16px 0 10px; }
.stage { display: flex; align-items: center; gap: 9px; color: #577795; }
.love { height: 48px; margin-top: 32px; color: #8487a3; }
.love label { display: flex; align-items: center; gap: 9px; color: #c18aa9; }
.child progress { height: 9px; margin-top: 5px; }

/* Dock */
.dock {
  flex: none;
  display: grid;
  grid-template-columns: repeat(5, 1fr);
  gap: 12px 11px;
  padding: 12px 13px 22px 14px;
  border-top: 2px solid #1c2444;
  background: #070a1b;
}
.dock button { height: 85px; gap: 11px; border-radius: 17px; }
.dock .wide { grid-column: 1 / -1; background: #452c17; }
.k1 { background: #171f40; }
.k2 { background: #164265; }
.k3 { background: #2c2e5d; }
.k4 { background: #203057; }
.k5 { background: #14291c; }
.k6 { background: #102d49; }
.k7 { background: #1f1235; }
.k8 { background: #3b240e; }
.k9 { background: #123a2a; }
.k10 { background: #351c47; }
.k11 { background: #441333; }
.k12 { background: #291e55; }
.k13 { background: #122453; }
.k14 { background: #301c0f; }
.k15 { background: #081d46; }
.k16 { background: #12353a; }
.k17 { background: #248d6d; }
.k18 { background: #08301d; }
.k19 { background: #25123d; }
.k20 { background: #233674; }
```
